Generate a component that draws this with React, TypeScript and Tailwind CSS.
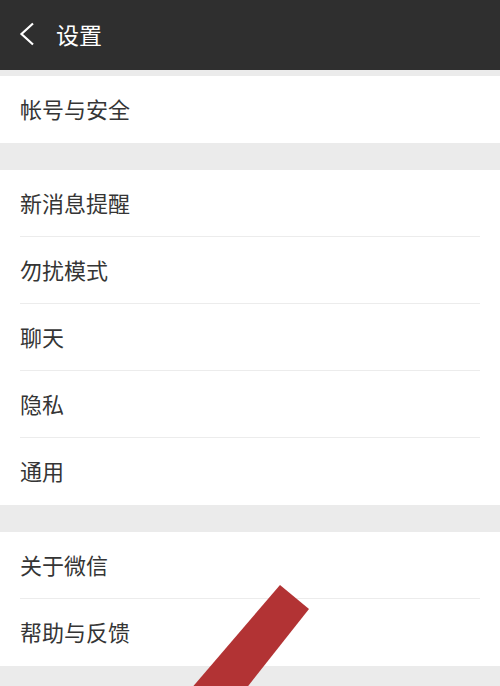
import React from "react";

const font = { fontFamily: '"Noto Sans CJK SC", "Noto Sans", sans-serif' };

function Item({ label, divider }: { label: string; divider?: boolean }) {
  return (
    <div className="relative h-[67px] bg-white flex items-center pl-[20px] pb-[4px]">
      <span className="text-[22px] text-[#353535] leading-none">{label}</span>
      {divider && (
        <div className="absolute left-[20px] right-[20px] bottom-0 h-px bg-[#ececec]" />
      )}
    </div>
  );
}

export default function App() {
  return (
    <div className="relative w-[500px] h-[686px] overflow-hidden bg-[#ebebeb]" style={font}>
      <div className="h-[70px] bg-[#2f2f2f] flex items-center pl-[19px] pb-[2px]">
        <svg width="16" height="24" viewBox="0 0 16 24" className="mr-[21px]">
          <polyline points="14,1.5 2.5,12 14,22.5" fill="none" stroke="#ffffff" strokeWidth="2.2" strokeLinejoin="miter" />
        </svg>
        <span className="text-[23px] text-white leading-none">设置</span>
      </div>
      <div className="h-[6px]" />
      <Item label="帐号与安全" />
      <div className="h-[27px]" />
      <Item label="新消息提醒" divider />
      <Item label="勿扰模式" divider />
      <Item label="聊天" divider />
      <Item label="隐私" divider />
      <Item label="通用" />
      <div className="h-[27px]" />
      <Item label="关于微信" divider />
      <Item label="帮助与反馈" />
      <svg className="absolute left-0 top-0 pointer-events-none" width="500" height="686" viewBox="0 0 500 686">
        <polygon points="280,585 309,609 245,690 190,690" fill="#b23334" />
      </svg>
    </div>
  );
}
